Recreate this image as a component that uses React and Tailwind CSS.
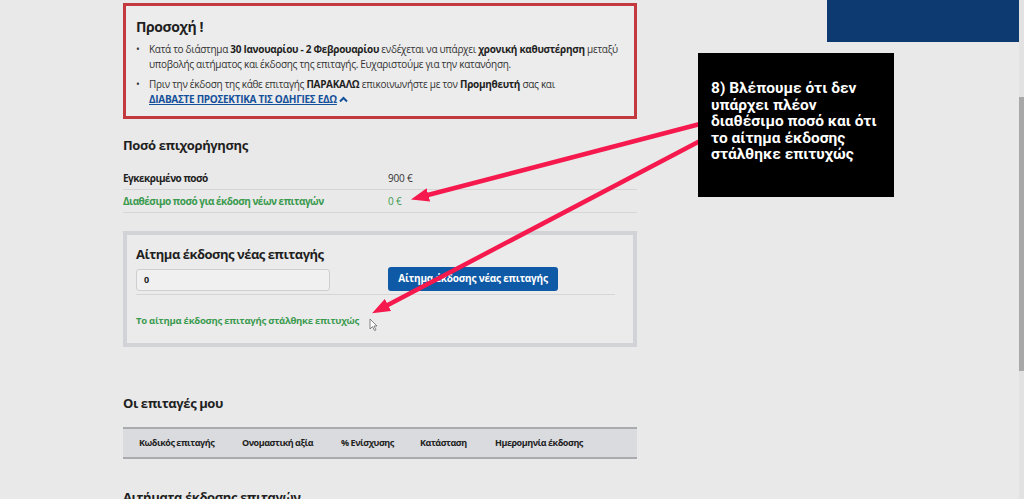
const columns = [
  { label: "Κωδικός επιταγής", w: "w-[103px]" },
  { label: "Ονομαστική αξία", w: "w-[99px]" },
  { label: "% Ενίσχυσης", w: "w-[79px]" },
  { label: "Κατάσταση", w: "w-[75px]" },
  { label: "Ημερομηνία έκδοσης", w: "w-[120px]" },
];

const Arrows = () => (
  <svg className="absolute inset-0 pointer-events-none" width="1024" height="499">
    <defs>
      <marker id="head" markerWidth="4" markerHeight="3" refX="1" refY="1.5" orient="auto" markerUnits="strokeWidth">
        <path d="M0,0 L4,1.5 L0,3 Z" fill="#f5194d" />
      </marker>
    </defs>
    <line x1="700" y1="124" x2="424" y2="196" stroke="#f5194d" strokeWidth="4.5" strokeLinecap="round" markerEnd="url(#head)" />
    <line x1="700" y1="141" x2="384" y2="307" stroke="#f5194d" strokeWidth="4.5" strokeLinecap="round" markerEnd="url(#head)" />
  </svg>
);

const Cursor = () => (
  <svg className="absolute left-[369px] top-[318px]" width="9" height="13" viewBox="0 0 9 13">
    <path d="M1 1 L1 11 L3.5 8.5 L5.5 12.5 L7 11.8 L5 8 L8 8 Z" fill="#fff" stroke="#666" strokeWidth="0.8" />
  </svg>
);

const App = () => {
  return (
    <div className="relative w-[1024px] h-[499px] overflow-hidden bg-[#e9e9e9] font-['Open_Sans',sans-serif] text-[#222]">
      <div className="flex">
        <div className="w-[123px] shrink-0" />
        <div className="w-[514px] shrink-0">
          <div className="mt-[3px] h-[116px] border-[3px] border-[#c23a40] bg-[#ececec] px-[10px] pt-[11px]">
            <h3 className="text-[14px] font-bold leading-[20px] tracking-[-0.4px] text-[#1f1f1f]">Προσοχή !</h3>
            <ul className="mt-[5px] text-[10px] leading-[15px] tracking-[-0.3px] text-[#333]">
              <li className="flex">
                <span className="w-[13px] shrink-0">•</span>
                <span>
                  Κατά το διάστημα <b className="text-[#1f1f1f]">30 Ιανουαρίου - 2 Φεβρουαρίου</b> ενδέχεται να υπάρχει{" "}
                  <b className="text-[#1f1f1f]">χρονική καθυστέρηση</b> μεταξύ υποβολής αιτήματος και έκδοσης της επιταγής. Ευχαριστούμε για την κατανόηση.
                </span>
              </li>
              <li className="flex mt-[5px]">
                <span className="w-[13px] shrink-0">•</span>
                <span>
                  Πριν την έκδοση της κάθε επιταγής <b className="text-[#1f1f1f]">ΠΑΡΑΚΑΛΩ</b> επικοινωνήστε με τον{" "}
                  <b className="text-[#1f1f1f]">Προμηθευτή</b> σας και
                  <br />
                  <span className="font-bold text-[#15509a] underline">ΔΙΑΒΑΣΤΕ ΠΡΟΣΕΚΤΙΚΑ ΤΙΣ ΟΔΗΓΙΕΣ ΕΔΩ</span>
                  <svg className="inline-block ml-[2px] -mt-[2px]" width="9" height="7" viewBox="0 0 9 7">
                    <path d="M1 5.5 L4.5 2 L8 5.5" fill="none" stroke="#15509a" strokeWidth="2" />
                  </svg>
                </span>
              </li>
            </ul>
          </div>

          <h3 className="mt-[16px] text-[13px] font-bold leading-[20px] tracking-[-0.4px] text-[#1f1f1f]">Ποσό επιχορήγησης</h3>
          <div className="mt-[12px] text-[10px] tracking-[-0.5px]">
            <div className="flex items-center h-[23px] border-b border-[#d6d6d6]">
              <span className="w-[265px] font-bold text-[#222]">Εγκεκριμένο ποσό</span>
              <span className="text-[#333] tracking-[-0.2px]">900 €</span>
            </div>
            <div className="flex items-center h-[23px] border-b border-[#d6d6d6]">
              <span className="w-[265px] font-bold text-[#3a9a4e]">Διαθέσιμο ποσό για έκδοση νέων επιταγών</span>
              <span className="text-[#3a9a4e] tracking-[-0.2px]">0 €</span>
            </div>
          </div>

          <div className="mt-[18px] h-[116px] border-[4px] border-[#d2d3d6] bg-[#ebebeb] px-[9px] pt-[9px]">
            <h3 className="text-[13px] font-bold leading-[20px] tracking-[-0.5px] text-[#1f1f1f]">Αίτημα έκδοσης νέας επιταγής</h3>
            <div className="mt-[5px] flex items-center pb-[3px] border-b border-[#d6d6d6] mr-[9px]">
              <div className="w-[194px] h-[22px] rounded-[3px] border border-[#cfcfcf] bg-[#f0f0f0] px-[7px] text-[9px] font-bold leading-[20px]">0</div>
              <button className="ml-[58px] w-[170px] h-[24px] -mt-[3px] rounded-[3px] bg-[#0f5aa6] text-[10px] font-bold tracking-[-0.2px] text-white">
                Αίτημα έκδοσης νέας επιταγής
              </button>
            </div>
            <p className="mt-[19px] text-[9.5px] font-bold tracking-[-0.25px] text-[#3a9a4e]">Το αίτημα έκδοσης επιταγής στάλθηκε επιτυχώς</p>
          </div>

          <h3 className="mt-[46px] text-[13px] font-bold leading-[20px] tracking-[-0.4px] text-[#1f1f1f]">Οι επιταγές μου</h3>
          <div className="mt-[14px] h-[32px] flex items-center bg-[#d9dbde] border-t-2 border-b-2 border-[#a9abae] pl-[16px] text-[9px] font-bold tracking-[-0.45px] text-[#222]">
            {columns.map((c) => (
              <span key={c.label} className={c.w}>{c.label}</span>
            ))}
          </div>

          <h3 className="mt-[28px] text-[13px] font-bold leading-[20px] tracking-[-0.4px] text-[#1f1f1f]">Αιτήματα έκδοσης επιταγών</h3>
        </div>
      </div>

      <div className="absolute left-[827px] top-0 w-[193px] h-[42px] bg-[#0d3a70]" />
      <div className="absolute right-0 top-0 w-[5px] h-[499px] bg-[#e2e2e2]">
        <div className="mt-[97px] h-[274px] bg-[#a8a8a8]" />
      </div>

      <Arrows />

      <div className="absolute left-[698px] top-[53px] w-[196px] h-[144px] bg-black pl-[13px] pt-[27px] font-['Roboto',sans-serif] text-[15.5px] font-bold leading-[16.5px] text-white">
        8) Βλέπουμε ότι δεν
        <br />
        υπάρχει πλέον
        <br />
        διαθέσιμο ποσό και ότι
        <br />
        το αίτημα έκδοσης
        <br />
        στάλθηκε επιτυχώς
      </div>

      <Cursor />
    </div>
  );
};

export default App;
